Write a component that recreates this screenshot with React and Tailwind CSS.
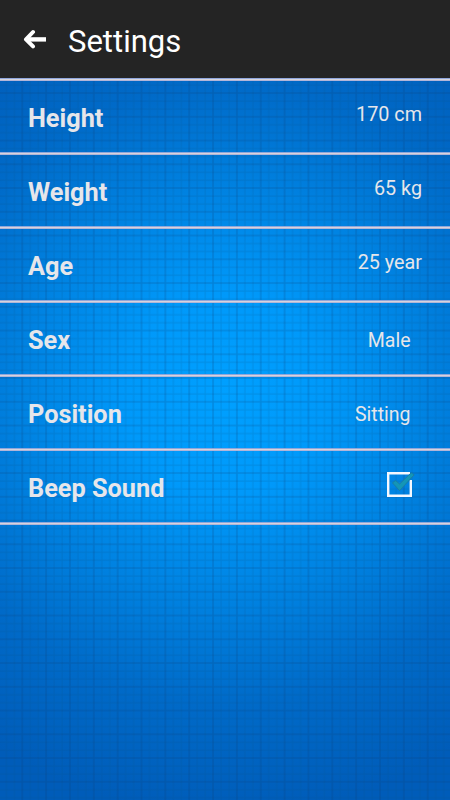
const measurements = [
  { label: "Height", value: "170 cm" },
  { label: "Weight", value: "65 kg" },
  { label: "Age", value: "25 year" }
];

const choices = [
  { label: "Sex", value: "Male" },
  { label: "Position", value: "Sitting" }
];

function BackIcon() {
  return (
    <svg width="24" height="20" viewBox="0 0 24 20" fill="none" stroke="#fff">
      <path d="M3.5 10.4H23" strokeWidth="4.4" />
      <path
        d="M10 3L3 10.4L10 17.4"
        strokeWidth="4"
        strokeLinecap="round"
        strokeLinejoin="round"
      />
    </svg>
  );
}

function CheckedBox() {
  return (
    <svg width="30" height="30" viewBox="0 0 30 30" fill="none">
      <path d="M25 3.2H3.2V25.8H25.8V10" stroke="#f4f8ff" strokeWidth="2.4" />
      <path
        d="M7.4 12.8L10.6 10.6L14.6 14L26.2 2.8L29.2 4.8L14.6 20.6Z"
        fill="#1496b6"
        stroke="#1a7fa6"
        strokeWidth="1"
        strokeLinejoin="round"
      />
    </svg>
  );
}

// graph paper: thin lines every 8px, a stronger one every third
function GridBackground() {
  return (
    <svg className="absolute inset-0" width="450" height="800">
      <defs>
        <pattern
          id="grid"
          x="-2.6"
          y="-2.95"
          width="23.85"
          height="23.75"
          patternUnits="userSpaceOnUse"
        >
          <path
            d="M9 0V23.8M17 0V23.8M0 9H23.85M0 17H23.85"
            stroke="#085080"
            strokeOpacity="0.18"
            strokeWidth="1.1"
          />
          <path
            d="M1 0V23.8M0 1H23.85"
            stroke="#083c70"
            strokeOpacity="0.22"
            strokeWidth="1.6"
          />
        </pattern>
      </defs>
      <rect width="450" height="800" fill="url(#grid)" />
    </svg>
  );
}

function Divider() {
  return (
    <div className="h-[3px]">
      <div className="h-px bg-[#8fa6dc]" />
      <div className="h-px bg-[#d6d4dc]" />
      <div className="h-px bg-[#b2b5d8]" />
    </div>
  );
}

function Row({ label, children }) {
  return (
    <>
      <div className="flex h-[71px] justify-between pl-7">
        <span className="pt-[19px] text-[25.3px] leading-[38px] font-bold">
          {label}
        </span>
        {children}
      </div>
      <Divider />
    </>
  );
}

export default function App() {
  return (
    <div className="relative h-[800px] w-[450px] overflow-hidden bg-[radial-gradient(circle_at_225px_395px,#00a0ff_0px,#0099fa_100px,#0081e0_210px,#006ac8_310px,#005cb9_420px)] font-['Roboto',sans-serif] text-[#e6e6ea]">
      <GridBackground />
      <div className="relative">
        <header className="flex h-[78px] items-center bg-[#242424] pl-[23px] text-white">
          <BackIcon />
          <h1 className="pt-1.5 pl-[21px] text-[31px] leading-10">Settings</h1>
        </header>
        <main>
          <Divider />
          {measurements.map((m) => (
            <Row key={m.label} label={m.label}>
              <span className="pt-5 pr-7 text-[19.8px] leading-7">
                {m.value}
              </span>
            </Row>
          ))}
          {choices.map((c) => (
            <Row key={c.label} label={c.label}>
              <span className="pt-6 pr-[39.5px] text-[19.5px] leading-7">
                {c.value}
              </span>
            </Row>
          ))}
          <Row label="Beep Sound">
            <span className="pt-[19px] pr-[35px]">
              <CheckedBox />
            </span>
          </Row>
        </main>
      </div>
    </div>
  );
}
